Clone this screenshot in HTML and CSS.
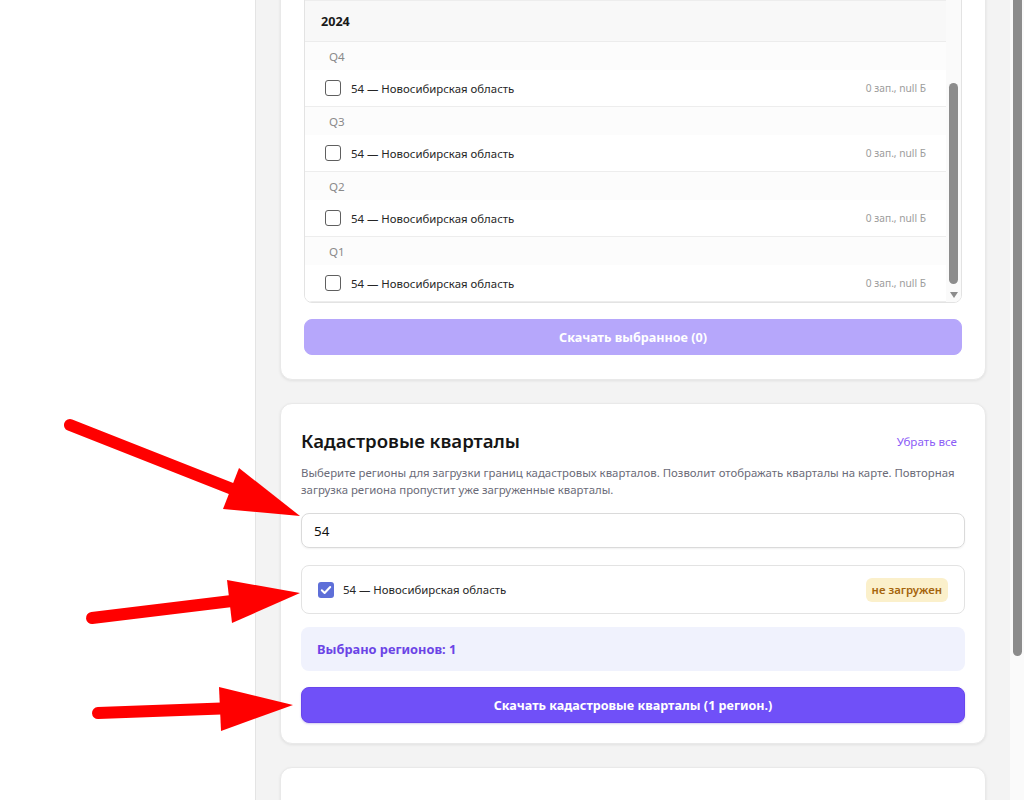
FILE: index.html
```html
<!DOCTYPE html>
<html lang="ru">
<head>
<meta charset="utf-8">
<title>Загрузка данных</title>
<link rel="stylesheet" href="styles.css">
</head>
<body>
<div class="app">
  <aside class="sidebar"></aside>

  <main class="main" id="main">
    <!-- Архив выгрузок по кварталам -->
    <section class="card card-archive">
      <h2 class="card-title">Архив выгрузок</h2>
      <p class="card-desc">Выберите периоды и регионы для скачивания сохранённых выгрузок.</p>

      <div class="period-box">
        <div class="period-list" id="periodList">
          <div class="year">2025</div>
          <div class="quarter">Q4</div>
          <div class="period-row"><span class="box"></span><span class="row-name">54 — Новосибирская область</span><span class="row-meta">0 зап., null Б</span></div>
          <div class="quarter">Q3</div>
          <div class="period-row"><span class="box"></span><span class="row-name">54 — Новосибирская область</span><span class="row-meta">0 зап., null Б</span></div>
          <div class="quarter">Q2</div>
          <div class="period-row"><span class="box"></span><span class="row-name">54 — Новосибирская область</span><span class="row-meta">0 зап., null Б</span></div>
          <div class="quarter">Q1</div>
          <div class="period-row"><span class="box"></span><span class="row-name">54 — Новосибирская область</span><span class="row-meta">0 зап., null Б</span></div>

          <div class="year">2024</div>
          <div class="quarter">Q4</div>
          <div class="period-row"><span class="box"></span><span class="row-name">54 — Новосибирская область</span><span class="row-meta">0 зап., null Б</span></div>
          <div class="quarter">Q3</div>
          <div class="period-row"><span class="box"></span><span class="row-name">54 — Новосибирская область</span><span class="row-meta">0 зап., null Б</span></div>
          <div class="quarter">Q2</div>
          <div class="period-row"><span class="box"></span><span class="row-name">54 — Новосибирская область</span><span class="row-meta">0 зап., null Б</span></div>
          <div class="quarter">Q1</div>
          <div class="period-row"><span class="box"></span><span class="row-name">54 — Новосибирская область</span><span class="row-meta">0 зап., null Б</span></div>
        </div>
        <!-- полоса прокрутки списка -->
        <div class="list-rail">
          <span class="list-thumb"></span>
          <span class="rail-arrow"></span>
        </div>
      </div>

      <button class="btn btn-primary btn-disabled" type="button">Скачать выбранное (0)</button>
    </section>

    <!-- Кадастровые кварталы -->
    <section class="card card-cadastral" id="cadastralCard">
      <div class="card-head">
        <h2 class="card-title">Кадастровые кварталы</h2>
        <button class="link-btn" type="button">Убрать все</button>
      </div>
      <p class="card-desc desc-tight">Выберите регионы для загрузки границ кадастровых кварталов. Позволит отображать кварталы на карте. Повторная загрузка региона пропустит уже загруженные кварталы.</p>

      <div class="search">54</div>

      <div class="region-list">
        <div class="region-row">
          <span class="box box-checked">
            <svg viewBox="0 0 16 16" width="16" height="16"><path d="M3.8 8.3l2.8 2.7 5.6-6" fill="none" stroke="#fff" stroke-width="2" stroke-linecap="round" stroke-linejoin="round"/></svg>
          </span>
          <span class="row-name">54 — Новосибирская область</span>
          <span class="badge">не загружен</span>
        </div>
      </div>

      <div class="summary">Выбрано регионов: 1</div>

      <button class="btn btn-primary" type="button">Скачать кадастровые кварталы (1 регион.)</button>
    </section>

    <!-- Земельные участки -->
    <section class="card card-parcels">
      <div class="card-head">
        <h2 class="card-title">Земельные участки</h2>
      </div>
      <p class="card-desc">Загрузка границ земельных участков по выбранным кварталам.</p>
    </section>
  </main>

  <!-- полоса прокрутки страницы -->
  <div class="page-rail"><span class="page-thumb"></span></div>

  <!-- Пометки поверх интерфейса -->
  <svg class="marks" viewBox="0 0 1024 800" width="1024" height="800" aria-hidden="true">
    <g fill="#ff0000" stroke="#ff0000" stroke-width="12" stroke-linecap="round">
      <line x1="70" y1="425" x2="250" y2="496"/>
      <polygon points="239,468 300,516 223,509" stroke="none"/>
      <line x1="92" y1="618" x2="240" y2="600"/>
      <polygon points="227,580 300,593 232,623" stroke="none"/>
      <line x1="98" y1="713" x2="235" y2="708"/>
      <polygon points="219,687 293,705 221,731" stroke="none"/>
    </g>
  </svg>
</div>
<script src="script.js"></script>
</body>
</html>
```

FILE: styles.css
```css
* {
  box-sizing: border-box;
}

html,
body {
  margin: 0;
  height: 100%;
}

body {
  font-family: "Noto Sans", "Open Sans", sans-serif;
  color: #1d1d1f;
  background: #ffffff;
}

.app {
  position: relative;
  display: flex;
  height: 100vh;
  overflow: hidden;
}

.sidebar {
  flex: none;
  width: 256px;
  background: #ffffff;
  border-right: 1px solid #e4e4e4;
}

.main {
  position: relative;
  flex: 1;
  overflow: hidden;
  background: #f3f3f3;
  padding: 24px;
  display: flex;
  flex-direction: column;
  gap: 23px;
}

/* page scrollbar */
.page-rail {
  flex: none;
  width: 14px;
  background: #fafafa;
  padding: 0 2px 0 3px;
}

.page-thumb {
  display: block;
  height: 656px;
  background: #8c8c8c;
  border-radius: 0 0 5px 5px;
}

/* cards */
.card {
  flex: none;
  background: #ffffff;
  border: 1px solid #e9e9e9;
  border-radius: 12px;
  box-shadow: 0 1px 3px rgba(0, 0, 0, 0.08);
}

.card-archive {
  padding: 23px 23px 24px;
}

.card-cadastral,
.card-parcels {
  padding: 20px;
}

.card-parcels {
  min-height: 260px;
  padding-top: 40px;
}

.card-head {
  display: flex;
  align-items: center;
  justify-content: space-between;
  min-height: 34px;
}

.card-title {
  margin: 0;
  font-size: 18.6px;
  font-weight: 600;
  line-height: 28px;
  color: #161616;
}

.card-desc {
  margin: 8px 0 16px;
  font-size: 11.4px;
  line-height: 17px;
  color: #6b6b78;
}

.desc-tight {
  margin: 6px 0 15px;
}

.link-btn {
  border: 0;
  background: none;
  padding: 4px 8px;
  font: inherit;
  font-size: 11.6px;
  color: #8b5cf6;
  cursor: pointer;
}

/* period list */
.period-box {
  display: flex;
  height: 360px;
  border: 1px solid #e3e3e3;
  border-radius: 8px;
  overflow: hidden;
}

.period-list {
  flex: 1;
  overflow: hidden;
}

.list-rail {
  flex: none;
  width: 15px;
  display: flex;
  flex-direction: column;
  justify-content: flex-end;
  align-items: center;
  gap: 4px;
  background: #fafafa;
}

.list-thumb {
  width: 9px;
  height: 201px;
  border-radius: 5px;
  background: #8c8c8c;
}

.rail-arrow {
  width: 15px;
  height: 14px;
  display: flex;
  align-items: center;
  justify-content: center;
}

.rail-arrow::before {
  content: "";
  border-left: 4.5px solid transparent;
  border-right: 4.5px solid transparent;
  border-top: 6px solid #8c8c8c;
}

.year {
  height: 41px;
  display: flex;
  align-items: center;
  padding-left: 16px;
  background: #f8f8f8;
  border-bottom: 1px solid #ececec;
  font-size: 12.6px;
  font-weight: 700;
  color: #1a1a1a;
}

.quarter {
  height: 28px;
  display: flex;
  align-items: center;
  padding-left: 24px;
  background: #fcfcfc;
  font-size: 11.6px;
  color: #8a8a8a;
}

.period-row {
  height: 37px;
  display: flex;
  align-items: center;
  gap: 10px;
  padding: 0 20px;
  background: #ffffff;
  border-bottom: 1px solid #ededed;
}

.box {
  flex: none;
  width: 16px;
  height: 16px;
  border: 1px solid #5f5f5f;
  border-radius: 3px;
  background: #ffffff;
}

.box-checked {
  border: 0;
  background: #5e6fd8;
  display: flex;
}

.row-name {
  font-size: 11.4px;
  color: #262626;
}

.row-meta {
  margin-left: auto;
  font-size: 10.2px;
  color: #9c9c9c;
}

/* buttons */
.btn {
  display: block;
  width: 100%;
  height: 36px;
  border: 0;
  border-radius: 8px;
  font: inherit;
  font-size: 12.6px;
  font-weight: 700;
  color: #ffffff;
  cursor: pointer;
}

.btn-primary {
  background: #7050f8;
  border: 1px solid #6846ec;
  box-shadow: 0 1px 2px rgba(80, 50, 200, 0.25);
}

.card-archive .btn {
  margin-top: 16px;
}

.btn-disabled {
  background: #b6a7fb;
  border-color: #b6a7fb;
  box-shadow: none;
  cursor: default;
}

/* cadastral form */
.search {
  height: 35px;
  display: flex;
  align-items: center;
  padding: 0 12px;
  border: 1px solid #dadada;
  border-radius: 8px;
  box-shadow: 0 1px 2px rgba(0, 0, 0, 0.06);
  font-size: 13.4px;
  color: #111111;
}

.region-list {
  margin-top: 17px;
  border: 1px solid #e3e3e3;
  border-radius: 8px;
}

.region-row {
  height: 47px;
  display: flex;
  align-items: center;
  gap: 9px;
  padding: 0 16px;
}

.badge {
  margin-left: auto;
  height: 24px;
  display: flex;
  align-items: center;
  padding: 0 6px;
  border-radius: 6px;
  background: #fbf0cb;
  font-size: 11.4px;
  font-weight: 600;
  color: #a5650d;
}

.summary {
  margin-top: 13px;
  height: 44px;
  display: flex;
  align-items: center;
  padding: 0 16px;
  border-radius: 8px;
  background: #f0f2fd;
  font-size: 12.8px;
  font-weight: 700;
  color: #6b44e6;
}

.card-cadastral .btn {
  margin-top: 16px;
}

/* annotation layer */
.marks {
  position: absolute;
  left: 0;
  top: 0;
  pointer-events: none;
}
```

FILE: script.js
```javascript
// Прокрутка: список периодов — к концу, основная область — к блоку кварталов
var list = document.getElementById('periodList');
list.scrollTop = list.scrollHeight;

var main = document.getElementById('main');
var card = document.getElementById('cadastralCard');
main.scrollTop = card.offsetTop - 403;
```
